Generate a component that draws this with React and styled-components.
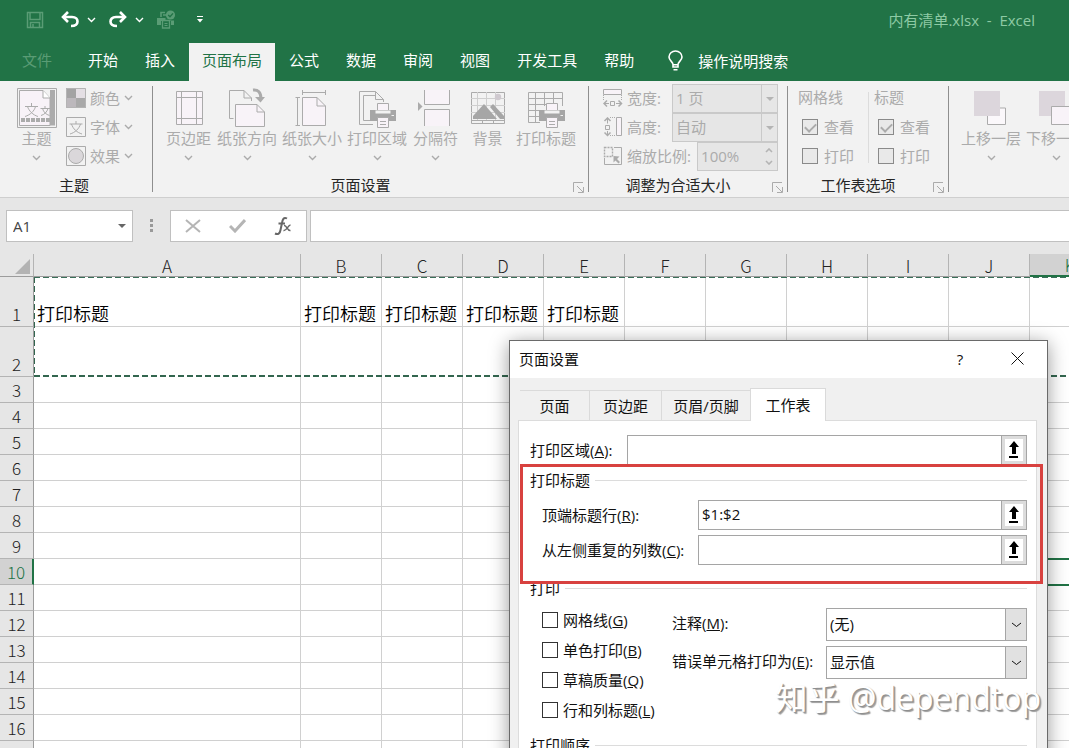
import React from "react";
import styled, { createGlobalStyle, css } from "styled-components";

const GREEN = "#217346";
const DIM = "#ababab";
const UI_FONT = '"Open Sans", "Noto Sans CJK SC", sans-serif';
const SHEET_FONT = '"Noto Sans CJK SC", sans-serif';

const GlobalStyle = createGlobalStyle`
  * { box-sizing: border-box; }
  html, body { margin: 0; height: 100%; overflow: hidden; }
  body { font-family: ${UI_FONT}; font-size: 15px; line-height: 20px; color: #1a1a1a; background: #fff; }
  button, input, select { font: inherit; color: inherit; margin: 0; padding: 0; }
  svg { display: block; flex: none; }
`;

const Window = styled.div`
  position: relative;
  display: flex;
  flex-direction: column;
  height: 100vh;
  overflow: hidden;
`;

/* ---------- title bar and tabs ---------- */

const TitleBar = styled.header`
  display: flex;
  align-items: center;
  justify-content: space-between;
  height: 41px;
  flex: none;
  padding: 0 34px 2px 26px;
  background: ${GREEN};
  color: #8dcaa4;
`;

const QuickAccess = styled.div`
  display: flex;
  align-items: center;
`;

const QuickButton = styled.button`
  display: flex;
  align-items: center;
  justify-content: center;
  width: ${(p) => p.$width || 20}px;
  height: 24px;
  margin-right: ${(p) => p.$gap || 0}px;
  border: 0;
  background: none;
  color: ${(p) => (p.$dim ? "#5a9c75" : "#fff")};
`;

const FileTitle = styled.div`
  white-space: pre;
`;

const TabStrip = styled.nav`
  display: flex;
  gap: 1px;
  height: 40px;
  flex: none;
  padding-top: 2px;
  background: ${GREEN};
  color: #fff;
  overflow: hidden;
`;

const RibbonTab = styled.button`
  flex: none;
  padding: 0 ${(p) => (p.$file ? 22 : 13)}px 5px;
  border: 0;
  background: ${(p) => (p.$active ? "#f2f2f2" : "none")};
  color: ${(p) => (p.$active ? GREEN : p.$file ? "#5a9c75" : "#fff")};
`;

const TellMe = styled.button`
  display: flex;
  align-items: center;
  gap: 15px;
  flex: none;
  margin-left: 20px;
  padding: 0 0 3px;
  border: 0;
  background: none;
`;

/* ---------- ribbon ---------- */

const RibbonBar = styled.div`
  display: flex;
  flex: none;
  height: 117px;
  background: #f2f2f2;
  border-bottom: 1px solid #cfcfcf;
  color: ${DIM};
  overflow: hidden;
`;

const Separator = styled.div`
  flex: none;
  width: 1px;
  margin: ${(p) => p.$inset || 5}px 0;
  background: ${(p) => (p.$light ? "#dcdcdc" : "#8f8f8f")};
`;

const Group = styled.section`
  display: flex;
  flex-direction: column;
  justify-content: space-between;
  flex: none;
  padding: 3px 0 4px;
`;

const GroupBody = styled.div`
  display: flex;
  gap: ${(p) => p.$gap ?? 5}px;
  padding: 0 ${(p) => p.$right ?? 12}px 0 ${(p) => p.$left ?? 12}px;
`;

const GroupFooter = styled.div`
  display: flex;
  align-items: flex-end;
  padding-right: 4px;
  line-height: 16px;
  color: #262626;
`;

const GroupName = styled.div`
  flex: 1;
  text-align: center;
`;

const Launcher = styled.button`
  width: 16px;
  height: 12px;
  padding-left: 5px;
  border: 0;
  background: none;
  color: ${DIM};
`;

const BigButton = styled.button`
  display: flex;
  flex-direction: column;
  align-items: center;
  flex: none;
  min-width: 47px;
  padding: 4px 0 0;
  border: 0;
  background: none;
  white-space: nowrap;
`;

const ChevronSlot = styled.span`
  display: flex;
  align-items: flex-end;
  height: 13px;
`;

const SmallStack = styled.div`
  display: flex;
  flex-direction: column;
  min-width: ${(p) => p.$width || 0}px;
`;

const SmallButton = styled.button`
  display: flex;
  align-items: center;
  gap: 4px;
  height: 29px;
  padding-bottom: 2px;
  border: 0;
  background: none;
`;

const ScaleRow = styled.div`
  display: flex;
  align-items: center;
  gap: 4px;
  width: 175px;
  height: 29px;
  padding-bottom: 2px;
`;

const ScaleLabel = styled.label`
  flex: 1;
  white-space: nowrap;
`;

const RibbonField = styled.div`
  position: relative;
  flex: none;
  align-self: flex-start;
  width: ${(p) => p.$width}px;
  height: 29px;
`;

const fieldSkin = css`
  display: block;
  width: 100%;
  height: 100%;
  padding: 0 3px 1px;
  border: 1px solid #c9c9c9;
  border-radius: 0;
  background: #e6e6e6;
  color: ${DIM};
  opacity: 1;
`;

const RibbonSelect = styled.select`
  ${fieldSkin}
  appearance: none;
`;

const RibbonInput = styled.input`
  ${fieldSkin}
`;

const FieldMark = styled.span`
  position: absolute;
  top: 1px;
  right: 1px;
  bottom: 1px;
  display: flex;
  flex-direction: column;
  align-items: center;
  justify-content: ${(p) => (p.$spin ? "space-between" : "center")};
  width: 16px;
  padding: ${(p) => (p.$spin ? 5 : 0)}px 0;
  border-left: ${(p) => (p.$spin ? 0 : 1)}px solid #c9c9c9;
  color: #b4b4b4;
  pointer-events: none;
`;

const OptionTitle = styled.div`
  height: 29px;
  line-height: 27px;
`;

const OptionLabel = styled.label`
  display: flex;
  align-items: center;
  gap: 6px;
  height: 29px;
  padding: 0 0 2px 4px;
`;

const Tick = styled.input`
  appearance: none;
  flex: none;
  display: flex;
  justify-content: center;
  width: 16px;
  height: 16px;
  border: 1px solid #333;
  background: #fff;
  &:disabled { border-color: #8a8a8a; background: #e9e9e9; }
  &:checked::after {
    content: "";
    width: 5px;
    height: 9px;
    margin-top: 1px;
    border: solid ${DIM};
    border-width: 0 2px 2px 0;
    transform: rotate(45deg);
  }
`;

/* ---------- formula bar ---------- */

const FormulaBar = styled.div`
  display: flex;
  flex: none;
  height: 56px;
  padding: 12px 0 12px 6px;
  background: #e6e6e6;
`;

const NameBox = styled.div`
  display: flex;
  align-items: center;
  width: 127px;
  padding: 0 6px;
  border: 1px solid #c0c0c0;
  background: #fff;
`;

const NameInput = styled.input`
  flex: 1;
  min-width: 0;
  border: 0;
  outline: 0;
  background: none;
  color: #444;
`;

const Grip = styled.div`
  display: flex;
  align-items: center;
  justify-content: center;
  width: 37px;
`;

const FormulaTools = styled.div`
  display: flex;
  align-items: center;
  justify-content: space-between;
  width: 137px;
  padding: 0 14px;
  border: 1px solid #c0c0c0;
  background: #fff;
`;

const ToolButton = styled.button`
  display: flex;
  border: 0;
  background: none;
`;

const FormulaInput = styled.input`
  flex: 1;
  min-width: 0;
  margin-left: 3px;
  border: 1px solid #c0c0c0;
  border-right: 0;
  outline: 0;
  background: #fff;
`;

/* ---------- sheet ---------- */

const SheetArea = styled.main`
  position: relative;
  flex: 1;
  min-height: 0;
  overflow: hidden;
`;

const Grid = styled.table`
  table-layout: fixed;
  width: 1192px;
  border-collapse: separate;
  border-spacing: 0;
  font-family: ${SHEET_FONT};
  font-size: 18px;
  font-weight: 350;
  line-height: 24px;
  color: #000;
`;

const Col = styled.col`
  width: ${(p) => p.$width}px;
`;

const HeadCell = styled.th`
  height: 23px;
  padding: 1px 0 0;
  border-bottom: ${(p) => (p.$selected ? `2px solid ${GREEN}` : "1px solid #9c9c9c")};
  border-right: 1px solid #b4b4b4;
  background: ${(p) => (p.$selected ? "#d2d2d2" : "#e6e6e6")};
  color: ${(p) => (p.$selected ? GREEN : "#222")};
  font-size: 17px;
  font-weight: 300;
  line-height: 20px;
  vertical-align: bottom;
`;

const Corner = styled(HeadCell)`
  padding: 0 3px 2px;
  svg { margin-left: auto; }
`;

const Row = styled.tr`
  height: ${(p) => p.$height}px;
`;

const RowHead = styled.th`
  padding: 0;
  border-right: ${(p) => (p.$selected ? `2px solid ${GREEN}` : "1px solid #9c9c9c")};
  border-bottom: 1px solid #b4b4b4;
  background: ${(p) => (p.$selected ? "#d2d2d2" : "#e6e6e6")};
  color: ${(p) => (p.$selected ? GREEN : "#222")};
  font-size: 17px;
  font-weight: 300;
  vertical-align: bottom;
`;

const Cell = styled.td`
  padding: 0 0 1px 3px;
  border-right: 1px solid #d0d0d0;
  border-bottom: 1px solid #d0d0d0;
  vertical-align: bottom;
  white-space: nowrap;
  ${(p) => p.$selected && css`outline: 2px solid ${GREEN}; outline-offset: -1px;`}
`;

const PrintTitleArea = styled.div`
  position: absolute;
  top: 23px;
  left: 34px;
  right: 0;
  height: 100px;
  pointer-events: none;
  background:
    repeating-linear-gradient(90deg, #3a6f59 0 6px, #fff 6px 9px) 0 0 / 100% 1px no-repeat,
    repeating-linear-gradient(90deg, #33664f 0 6px, #fff 6px 9px) 0 100% / 100% 2px no-repeat,
    repeating-linear-gradient(180deg, #33664f 0 6px, #fff 6px 9px) 0 0 / 1px 100% no-repeat;
`;

/* ---------- dialog ---------- */

const Dialog = styled.section`
  position: absolute;
  top: 340px;
  left: 509px;
  width: 539px;
  border: 1px solid #6a6a6a;
  background: #f0f0f0;
  color: #111;
  box-shadow: 0 3px 18px rgba(0, 0, 0, 0.4);
`;

const DialogHead = styled.header`
  display: flex;
  align-items: center;
  height: 37px;
  padding: 0 18px 2px 9px;
  background: #fff;
`;

const DialogTitle = styled.h2`
  flex: 1;
  margin: 0;
  font-size: 15px;
  font-weight: 400;
`;

const HeadButton = styled.button`
  display: flex;
  align-items: center;
  justify-content: center;
  width: 24px;
  height: 24px;
  margin-left: 33px;
  border: 0;
  background: none;
`;

const DialogTabs = styled.div`
  display: flex;
  align-items: flex-end;
  height: 42px;
  padding-left: 10px;
`;

const DialogTab = styled.button`
  height: ${(p) => (p.$active ? 33 : 30)}px;
  width: ${(p) => p.$width}px;
  border: 1px solid #dadada;
  border-left-width: ${(p) => (p.$active ? 1 : 0)}px;
  border-bottom: 0;
  background: ${(p) => (p.$active ? "#fff" : "#f0f0f0")};
  ${(p) => p.$active && css`margin: 0 0 -1px -1px; padding-bottom: 1px; position: relative;`}
`;

const Panel = styled.div`
  display: flex;
  flex-direction: column;
  margin: 0 10px 11px 8px;
  padding: 14px 9px 40px 11px;
  border: 1px solid #dcdcdc;
  background: #fff;
`;

const FieldRow = styled.div`
  display: flex;
  align-items: center;
  height: 30px;
`;

const FieldLabel = styled.label`
  flex: none;
  width: ${(p) => p.$width}px;
  white-space: nowrap;
`;

const RefInput = styled.input`
  flex: 1;
  min-width: 0;
  height: 30px;
  padding: 0 3px 3px;
  border: 1px solid #a5a5a5;
  border-right: 0;
  border-radius: 0;
  outline: 0;
  background: #fff;
`;

const PickButton = styled.button`
  display: flex;
  align-items: center;
  justify-content: center;
  width: 26px;
  height: 30px;
  border: 1px solid #a5a5a5;
  background: #fff;
  box-shadow: inset 0 0 0 3px #dcdcdc;
`;

const Fieldset = styled.section`
  display: flex;
  flex-direction: column;
  padding-top: ${(p) => p.$above}px;
`;

const Legend = styled.h3`
  display: flex;
  align-items: center;
  gap: 5px;
  margin: 0;
  font-size: 15px;
  font-weight: 400;
  &::after { content: ""; flex: 1; height: 1px; background: #dcdcdc; }
`;

const Indented = styled.div`
  display: flex;
  flex-direction: column;
  gap: 5px;
  padding: 10px 0 0 12px;
`;

const PrintOptions = styled.div`
  display: flex;
  padding: 7px 0 0 12px;
`;

const CheckColumn = styled.div`
  width: 130px;
`;

const CheckLabel = styled.label`
  display: flex;
  align-items: center;
  gap: 5px;
  height: 30px;
  white-space: nowrap;
`;

const ChoiceColumn = styled.div`
  display: flex;
  flex-direction: column;
  flex: 1;
  gap: 5px;
  padding-top: 3px;
`;

const ChoiceRow = styled.div`
  display: flex;
  height: 33px;
  line-height: 31px;
`;

const SelectBox = styled.div`
  position: relative;
  flex: 1;
  height: 33px;
`;

const DialogSelect = styled.select`
  appearance: none;
  display: block;
  width: 100%;
  height: 100%;
  padding: 0 3px 2px;
  border: 1px solid #a5a5a5;
  border-radius: 0;
  background: #fff;
`;

const SelectArrow = styled.span`
  position: absolute;
  top: 0;
  right: 0;
  bottom: 0;
  display: flex;
  align-items: center;
  justify-content: center;
  width: 22px;
  border: 1px solid #a5a5a5;
  background: #e1e1e1;
  pointer-events: none;
`;

const Highlight = styled.div`
  position: absolute;
  top: 123px;
  left: 10px;
  width: 523px;
  height: 120px;
  border: 3px solid #d8413f;
  pointer-events: none;
`;

const Watermark = styled.div`
  position: absolute;
  right: 28px;
  bottom: 30px;
  font-size: 32px;
  line-height: 40px;
  color: #fff;
  text-shadow: 1px 1px 1px #8c8c8c, 2px 2px 1px #a0a0a0;
  pointer-events: none;
`;

/* ---------- icons ---------- */

const Svg = ({ w, h = w, children, ...rest }) => (
  <svg width={w} height={h} viewBox={`0 0 ${w} ${h}`} fill="none" stroke="currentColor" aria-hidden="true" {...rest}>
    {children}
  </svg>
);

const Chevron = ({ size = 9, width = 1.4 }) => (
  <Svg w={size} h={6} strokeWidth={width}>
    <path d={`M1 1L${size / 2} 4.5L${size - 1} 1`} />
  </Svg>
);

const DownTriangle = () => (
  <Svg w={8} h={4} stroke="none" fill="currentColor"><path d="M0 0H8L4 4Z" /></Svg>
);

const SaveIcon = () => (
  <Svg w={18} strokeWidth={1.5}>
    <path d="M1.5 1.5H16.5V16.5H1.5Z" />
    <path d="M4 2V8.5H14V2M4.5 16.5V11.5H13.5V16.5M7 13V16" />
  </Svg>
);

const UndoIcon = () => (
  <Svg w={20} h={18} strokeWidth={2.6}>
    <path d="M3 6H12C16 6 17.5 8.5 17.5 10.5C17.5 13.5 15 15 11 15" />
    <path d="M8 1L3 6L8 11" />
  </Svg>
);

const RedoIcon = () => (
  <Svg w={20} h={18} strokeWidth={2.6}>
    <path d="M17 6H8C4 6 2.5 8.5 2.5 10.5C2.5 13.5 5 15 9 15" />
    <path d="M12 1L17 6L12 11" />
  </Svg>
);

const PrintCheckIcon = () => (
  <Svg w={20} h={19} strokeWidth={1.6}>
    <path d="M5 7V2.500H9M7 5H10" />
    <path d="M1 8H9.500V10.500H18V15H15V11H5V15H1Z" fill="currentColor" stroke="none" />
    <path d="M6.500 10.500H13.500V18H6.500Z" fill={GREEN} strokeWidth={1.300} /><path d="M8.500 13.500H11.500M8.500 15.500H11.500" strokeWidth={1} />
    <circle cx="14.5" cy="5" r="4.6" fill="currentColor" stroke="none" />
    <path d="M12.2 5L14 6.8L17 3.4" stroke={GREEN} strokeWidth={1.4} />
  </Svg>
);

const CustomizeIcon = () => (
  <Svg w={8} h={9} strokeWidth={1}>
    <path d="M1 1.5H7" /><path d="M1 4H7L4 7.5Z" fill="currentColor" stroke="none" />
  </Svg>
);

const BulbIcon = () => (
  <Svg w={15} h={21} strokeWidth={1.6}>
    <path d="M5 14.5C5 12 1 10.5 1 7A6.5 6 0 0 1 14 7C14 10.5 10 12 10 14.5V17H5Z" />
    <path d="M5 14.7H10M5.5 19.8H9.5" />
  </Svg>
);

const ThemeIcon = () => (
  <Svg w={40}>
    <path d="M.5 .5H39.5V39.5H.5Z" />
    <path d="M33 2H38V37.500H33Z" fill="currentColor" stroke="none" />
    <path d="M2.5 2.5H26L33 10V37.5H2.5Z" fill="#f8f2f8" />
    <path d="M26 2.5V10H33" fill="#fff" />
    <path d="M8 18.5H21M14.5 15V18.5M18.5 18.5C17.5 23 13 27 8 28.5M10.5 18.5C12 23 16 27 21 28.5" />
    <path d="M23.5 20.5H33M28 18V20.5M31 20.5C30 24 27.5 26.5 24 27.5M25.5 20.5C26.5 24 29 26.5 32.5 27.5" />
    <path d="M4 32H33" strokeWidth={4} strokeDasharray="4 1" />
  </Svg>
);

const ColorsIcon = () => (
  <Svg w={20} stroke="none">
    <path d="M0 0H10V10H0Z" fill="#a3a3a3" /><path d="M10 0H20V10H10Z" fill="#e4dfe4" />
    <path d="M0 10H10V20H0Z" fill="#bcb8bc" /><path d="M10 10H20V20H10Z" fill="#a9a9a9" />
    <path d="M.5 .5H19.5V19.5H.5Z" stroke="#b4b4b4" />
  </Svg>
);

const FontsIcon = () => (
  <Svg w={20}>
    <path d="M.5 .5H19.5V19.5H.5Z" />
    <path d="M3.5 7H16.5M10 4V7M14.5 7C13 12 9 15.5 4 17M5.5 7C7 12 11 15.5 16 17" />
  </Svg>
);

const EffectsIcon = () => (
  <Svg w={20}>
    <path d="M.5 .5H19.5V19.5H.5Z" /><circle cx="10" cy="10" r="7.5" fill="#dad7da" />
  </Svg>
);

const MarginsIcon = () => (
  <Svg w={40}>
    <path d="M7.5 3.5H33.5V36.5H7.5Z" fill="#f8f3f8" />
    <path d="M12.5 3.5V36.5M27.5 3.5V36.5M7 9.5H33M7 30.5H33" />
  </Svg>
);

const OrientationIcon = () => (
  <Svg w={40}>
    <path d="M6.5 30.5H2.5V2.5H17L24.5 10V13M17 2.5V10H24.5" />
    <path d="M8.5 16.5H30L37.5 24V38.5H8.5Z" fill="#f8f3f8" /><path d="M30 16.5V24H37.5" />
    <path d="M26 2C31 1.5 34 4 34 11" strokeWidth={3} />
    <path d="M28 9H38L33.5 14.5Z" fill="currentColor" stroke="none" />
  </Svg>
);

const SizeIcon = () => (
  <Svg w={40}>
    <path d="M10.5 9.5H25L33.5 18V37.5H10.5Z" fill="#f8f3f8" /><path d="M25 9.5V18H33.5" />
    <path d="M10.5 4.5H33.5M10.5 2V7M33.5 2V7M5.5 9.5V37.5M3.5 9.5H8M3.5 37.5H8" />
  </Svg>
);

const Printer = ({ x, y }) => (
  <g transform={`translate(${x} ${y})`}>
    <path d="M7.5 8V.5H18.5V8" fill="#f8f3f8" />
    <path d="M0 7H26V18H0Z" fill="#a6a6a6" stroke="none" />
    <path d="M5.5 7.5H20.5V10.5H5.5Z" fill="#f2f2f2" stroke="none" />
    <path d="M21.5 12.5H24" stroke="#f2f2f2" />
    <path d="M7.5 14.5H18.5V24.5H7.5Z" fill="#f8f3f8" /><path d="M10 18.5H16M10 21.5H16" />
  </g>
);

const PrintAreaIcon = () => (
  <Svg w={40}>
    <path d="M16 36.5H2.5V3.5H18.5L26.5 11.5V14M18.5 3.5V11.5H26.5" />
    <path d="M14 32.5H6.5V7.5H18.5" />
    <Printer x={13} y={15} />
  </Svg>
);

const BreaksIcon = () => (
  <Svg w={40}>
    <path d="M8.5 2V16.5H33.5V2M8.5 38V21.5H33.5V38" fill="#f8f3f8" />
    <path d="M2 14L6.5 18.5L2 23Z" fill="currentColor" stroke="none" />
  </Svg>
);

const BackgroundIcon = () => (
  <Svg w={40}>
    <path d="M3.5 4.5H36.5V35.5H3.5Z" />
    <path d="M3 10.5H37M3 17.5H37M3 24.5H37M9.5 4V32M18.5 4V32M27.5 4V32" stroke="#cfcfcf" />
    <circle cx="30" cy="9" r="3.2" fill="#cfc9cf" stroke="none" />
    <path d="M5 31V28L16 16L29 31Z" fill="#a6a6a6" stroke="none" />
    <path d="M22 19L25 16L36 28V31H32Z" fill="#a6a6a6" stroke="none" />
    <path d="M3.5 32.5H36.5M14.5 33V35M25.5 33V35" />
  </Svg>
);

const PrintTitlesIcon = () => (
  <Svg w={40}>
    <path d="M2.5 4.5H36.5V18M2.5 4.5V34.5H14M2.5 10.5H36.5M2.5 16.5H20M2.5 22.5H14M2.5 28.5H14M9.5 4.5V34.5M18.5 4.5V18M27.5 4.5V15" />
    <Printer x={13} y={15} />
  </Svg>
);

const WidthIcon = () => (
  <Svg w={20}>
    <path d="M.5 1.5H18.5V6.5H.5Z" fill="#f8f3f8" /><path d="M.5 7V12M18.5 7V12" strokeDasharray="1 1" />
    <path d="M7.5 13.5H11.5V17.5H7.5ZM1 15.5H6M13 15.5H18.5" /><path d="M4 12.5L1 15.5L4 18.5M15.5 12.5L18.5 15.5L15.5 18.5" strokeWidth={1.5} />
  </Svg>
);

const HeightIcon = () => (
  <Svg w={20}>
    <path d="M13.5 .5H18.5V18.5H13.5Z" fill="#f8f3f8" /><path d="M7 .5H13M7 18.5H13" strokeDasharray="1 1" />
    <path d="M2.5 8.5H6.5V12.5H2.5ZM4.5 1V6.5M4.5 14V18.5" /><path d="M1.5 4L4.5 1L7.5 4M1.5 15.5L4.5 18.5L7.5 15.5" strokeWidth={1.5} />
  </Svg>
);

const ScaleIcon = () => (
  <Svg w={20}>
    <path d="M1.5 1.5H9.5V10.5H1.5Z" strokeDasharray="2 1" strokeWidth={1.4} />
    <path d="M11 1.5H18.5V18.5H1.5V12" />
    <path d="M10.5 10V16.5L12.5 14.5L15.5 17.5L17 16L14 13L16.5 10.5Z" fill="currentColor" stroke="none" />
  </Svg>
);

const BringForwardIcon = () => (
  <Svg w={40}>
    <path d="M16.500 20H34.500V36.500H16.500Z" fill="#fbf8fb" /><path d="M3 3H29V28H3Z" fill="#dcd6dc" stroke="none" />
  </Svg>
);

const SendBackwardIcon = () => (
  <Svg w={40}>
    <path d="M3 3H29V28H3Z" fill="#dcd6dc" stroke="none" /><path d="M15.5 18.5H36.5V36.5H15.5Z" fill="#f8f3f8" />
  </Svg>
);

const LauncherIcon = () => (
  <Svg w={11}>
    <path d="M.5 10V.5H10M4 4L10 10M10.5 5V10.5H5" />
  </Svg>
);

const PickIcon = () => (
  <Svg w={12} h={18} stroke="none" fill="#000">
    <path d="M6 0L11 6H8V13H4V6H1Z" /><path d="M1 15H10V17H1Z" />
  </Svg>
);

/* ---------- pieces ---------- */

const Big = ({ icon, label, menu = true }) => (
  <BigButton disabled>
    {icon}
    <span>{label}</span>
    {menu && <ChevronSlot><Chevron /></ChevronSlot>}
  </BigButton>
);

const Small = ({ icon, label }) => (
  <SmallButton disabled>{icon}<span>{label}</span><Chevron /></SmallButton>
);

const RibbonGroup = ({ name, launcher, children, ...body }) => (
  <Group>
    <GroupBody {...body}>{children}</GroupBody>
    <GroupFooter>
      <GroupName>{name}</GroupName>
      {launcher && <Launcher aria-label={name}><LauncherIcon /></Launcher>}
    </GroupFooter>
  </Group>
);

const ScaleSelect = ({ icon, id, label, value }) => (
  <ScaleRow>
    {icon}
    <ScaleLabel htmlFor={id}>{label}</ScaleLabel>
    <RibbonField $width={106}>
      <RibbonSelect id={id} disabled defaultValue={value}><option>{value}</option></RibbonSelect>
      <FieldMark><DownTriangle /></FieldMark>
    </RibbonField>
  </ScaleRow>
);

const OptionColumn = ({ title, width }) => (
  <SmallStack $width={width}>
    <OptionTitle>{title}</OptionTitle>
    <OptionLabel><Tick type="checkbox" disabled defaultChecked />查看</OptionLabel>
    <OptionLabel><Tick type="checkbox" disabled />打印</OptionLabel>
  </SmallStack>
);

const RefField = ({ id, label, hotkey, width, value = "" }) => (
  <FieldRow>
    <FieldLabel htmlFor={id} $width={width}>{label}(<u>{hotkey}</u>):</FieldLabel>
    <RefInput id={id} defaultValue={value} />
    <PickButton aria-label={label}><PickIcon /></PickButton>
  </FieldRow>
);

const ChoiceField = ({ id, label, hotkey, value }) => (
  <ChoiceRow>
    <FieldLabel htmlFor={id} $width={154}>{label}(<u>{hotkey}</u>):</FieldLabel>
    <SelectBox>
      <DialogSelect id={id} defaultValue={value}><option>{value}</option></DialogSelect>
      <SelectArrow><Chevron size={11} width={1} /></SelectArrow>
    </SelectBox>
  </ChoiceRow>
);

const TABS = ["开始", "插入", "页面布局", "公式", "数据", "审阅", "视图", "开发工具", "帮助"];
const COLUMNS = ["A", "B", "C", "D", "E", "F", "G", "H", "I", "J", "K", "L"];
const ROWS = Array.from({ length: 17 }, (_, i) => i + 1);
const CHECKS = [["网格线", "G"], ["单色打印", "B"], ["草稿质量", "Q"], ["行和列标题", "L"]];

const Ribbon = () => (
  <RibbonBar>
    <RibbonGroup name="主题" $left={13} $right={19} $gap={6}>
      <Big icon={<ThemeIcon />} label="主题" />
      <SmallStack>
        <Small icon={<ColorsIcon />} label="颜色" />
        <Small icon={<FontsIcon />} label="字体" />
        <Small icon={<EffectsIcon />} label="效果" />
      </SmallStack>
    </RibbonGroup>
    <Separator />
    <RibbonGroup name="页面设置" launcher>
      <Big icon={<MarginsIcon />} label="页边距" />
      <Big icon={<OrientationIcon />} label="纸张方向" />
      <Big icon={<SizeIcon />} label="纸张大小" />
      <Big icon={<PrintAreaIcon />} label="打印区域" />
      <Big icon={<BreaksIcon />} label="分隔符" />
      <Big icon={<BackgroundIcon />} label="背景" menu={false} />
      <Big icon={<PrintTitlesIcon />} label="打印标题" menu={false} />
    </RibbonGroup>
    <Separator />
    <RibbonGroup name="调整为合适大小" launcher $left={14} $right={9}>
      <SmallStack>
        <ScaleSelect icon={<WidthIcon />} id="fit-width" label="宽度:" value="1 页" />
        <ScaleSelect icon={<HeightIcon />} id="fit-height" label="高度:" value="自动" />
        <ScaleRow>
          <ScaleIcon />
          <ScaleLabel htmlFor="fit-scale">缩放比例:</ScaleLabel>
          <RibbonField $width={81}>
            <RibbonInput id="fit-scale" disabled defaultValue="100%" />
            <FieldMark $spin>
              <Svg w={8} h={5} strokeWidth={1.6}><path d="M1 4L4 1L7 4" /></Svg>
              <Svg w={8} h={5} strokeWidth={1.6}><path d="M1 1L4 4L7 1" /></Svg>
            </FieldMark>
          </RibbonField>
        </ScaleRow>
      </SmallStack>
    </RibbonGroup>
    <Separator />
    <RibbonGroup name="工作表选项" launcher $left={10} $right={18} $gap={5}>
      <OptionColumn title="网格线" width={65} />
      <Separator $light $inset={8} />
      <OptionColumn title="标题" width={56} />
    </RibbonGroup>
    <Separator />
    <RibbonGroup>
      <Big icon={<BringForwardIcon />} label="上移一层" />
      <Big icon={<SendBackwardIcon />} label="下移一层" />
    </RibbonGroup>
  </RibbonBar>
);

const Sheet = () => (
  <SheetArea>
    <Grid>
      <colgroup>
        <Col $width={34} />
        {COLUMNS.map((c) => <Col key={c} $width={c === "A" ? 267 : 81} />)}
      </colgroup>
      <thead>
        <tr>
          <Corner aria-label="全选">
            <Svg w={15} stroke="none" fill="#b3b3b3"><path d="M15 0V15H0Z" /></Svg>
          </Corner>
          {COLUMNS.map((c) => <HeadCell key={c} $selected={c === "K"}>{c}</HeadCell>)}
        </tr>
      </thead>
      <tbody>
        {ROWS.map((r) => (
          <Row key={r} $height={r < 3 ? 50 : 26}>
            <RowHead $selected={r === 10}>{r}</RowHead>
            {COLUMNS.map((c, i) => (
              <Cell key={c} $selected={r === 10 && c === "K"}>{r === 1 && i < 5 ? "打印标题" : null}</Cell>
            ))}
          </Row>
        ))}
      </tbody>
    </Grid>
    <PrintTitleArea />
  </SheetArea>
);

const PageSetup = () => (
  <Dialog role="dialog" aria-labelledby="page-setup-title">
    <DialogHead>
      <DialogTitle id="page-setup-title">页面设置</DialogTitle>
      <HeadButton>?</HeadButton>
      <HeadButton aria-label="关闭"><Svg w={13}><path d="M.5 .5L12.5 12.5M12.5 .5L.5 12.5" /></Svg></HeadButton>
    </DialogHead>
    <DialogTabs role="tablist">
      <DialogTab role="tab" $width={70}>页面</DialogTab>
      <DialogTab role="tab" $width={72}>页边距</DialogTab>
      <DialogTab role="tab" $width={89}>页眉/页脚</DialogTab>
      <DialogTab role="tab" aria-selected $active $width={76}>工作表</DialogTab>
    </DialogTabs>
    <Panel>
      <RefField id="print-area" label="打印区域" hotkey="A" width={97} />
      <Fieldset $above={5}>
        <Legend>打印标题</Legend>
        <Indented>
          <RefField id="title-rows" label="顶端标题行" hotkey="R" width={156} value="$1:$2" />
          <RefField id="title-cols" label="从左侧重复的列数" hotkey="C" width={156} />
        </Indented>
      </Fieldset>
      <Fieldset $above={13}>
        <Legend>打印</Legend>
        <PrintOptions>
          <CheckColumn>
            {CHECKS.map(([label, key]) => (
              <CheckLabel key={key}><Tick type="checkbox" /><span>{label}(<u>{key}</u>)</span></CheckLabel>
            ))}
          </CheckColumn>
          <ChoiceColumn>
            <ChoiceField id="comments" label="注释" hotkey="M" value="(无)" />
            <ChoiceField id="errors" label="错误单元格打印为" hotkey="E" value="显示值" />
          </ChoiceColumn>
        </PrintOptions>
      </Fieldset>
      <Fieldset $above={10}>
        <Legend>打印顺序</Legend>
      </Fieldset>
    </Panel>
    <Highlight />
  </Dialog>
);

export default function App() {
  return (
    <Window>
      <GlobalStyle />
      <TitleBar>
        <QuickAccess>
          <QuickButton $dim $width={18} $gap={16} aria-label="保存"><SaveIcon /></QuickButton>
          <QuickButton $gap={6} aria-label="撤消"><UndoIcon /></QuickButton>
          <QuickButton $width={10} $gap={12} aria-label="撤消列表"><Chevron /></QuickButton>
          <QuickButton $gap={6} aria-label="恢复"><RedoIcon /></QuickButton>
          <QuickButton $width={10} $gap={12} aria-label="恢复列表"><Chevron /></QuickButton>
          <QuickButton $dim $gap={20} aria-label="打印预览"><PrintCheckIcon /></QuickButton>
          <QuickButton $width={8} aria-label="自定义"><CustomizeIcon /></QuickButton>
        </QuickAccess>
        <FileTitle>{"内有清单.xlsx  -  Excel"}</FileTitle>
      </TitleBar>
      <TabStrip>
        <RibbonTab $file>文件</RibbonTab>
        {TABS.map((t) => <RibbonTab key={t} $active={t === "页面布局"}>{t}</RibbonTab>)}
        <TellMe><BulbIcon />操作说明搜索</TellMe>
      </TabStrip>
      <Ribbon />
      <FormulaBar>
        <NameBox><NameInput aria-label="名称框" defaultValue="A1" /><Svg w={8} h={4} stroke="none" fill="#666"><path d="M0 0H8L4 4Z" /></Svg></NameBox>
        <Grip><Svg w={3} h={14} stroke="none" fill="#999"><path d="M0 0H3V3H0ZM0 5H3V8H0ZM0 10H3V13H0Z" /></Svg></Grip>
        <FormulaTools>
          <ToolButton aria-label="取消"><Svg w={16} h={14} stroke="#b5b5b5" strokeWidth={2}><path d="M1 1L15 13M15 1L1 13" /></Svg></ToolButton>
          <ToolButton aria-label="输入"><Svg w={17} h={14} stroke="#b5b5b5" strokeWidth={3}><path d="M1 7L6 12L16 1" /></Svg></ToolButton>
          <ToolButton aria-label="插入函数">
            <Svg w={18} h={20} stroke="#666" strokeWidth={2}>
              <path d="M13 2.5C9.5 .5 8.5 4 8 7L6.5 14C6 17.5 4 19 1 17.5M4.5 7.5H11" />
              <path d="M10 9.5C13 9 13 15 16.5 14.5M16.5 9C14 9 12.5 15.5 9.5 14.5" strokeWidth={1.5} />
            </Svg>
          </ToolButton>
        </FormulaTools>
        <FormulaInput aria-label="编辑栏" />
      </FormulaBar>
      <Sheet />
      <PageSetup />
      <Watermark>知乎 @dependtop</Watermark>
    </Window>
  );
}
